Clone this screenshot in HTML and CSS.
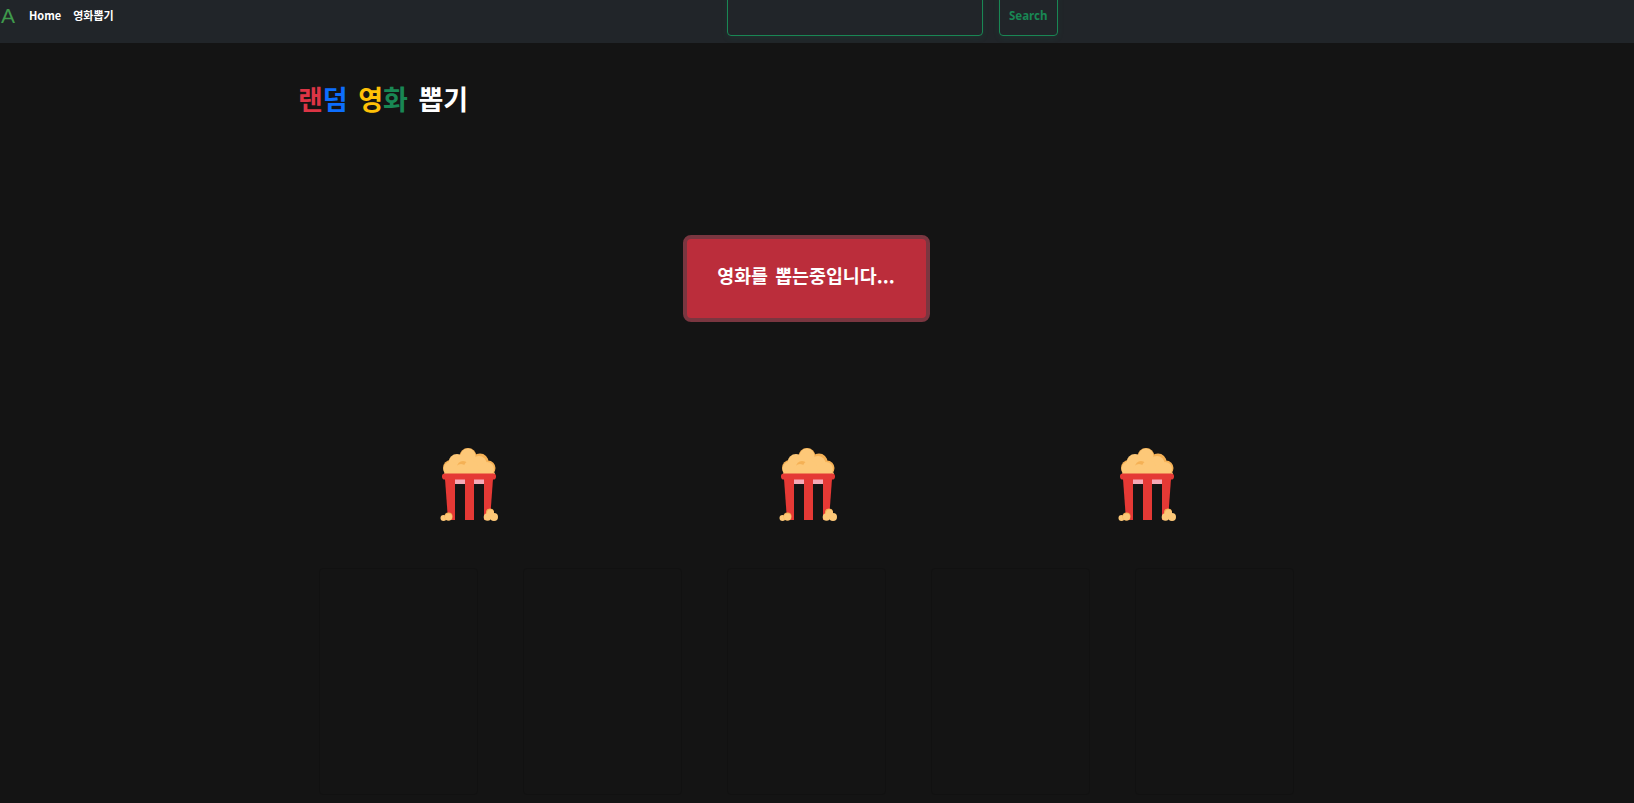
FILE: index.html
```html
<!DOCTYPE html>
<html lang="ko">
<head>
<meta charset="utf-8">
<title>랜덤 영화 뽑기</title>
<link rel="stylesheet" href="styles.css">
</head>
<body>
<svg class="defs" width="0" height="0" aria-hidden="true">
  <symbol id="popcorn" viewBox="0 0 60 76">
    <path d="M4 27 L8 20 L18 10 L40 10 L52 20 L55 27 Z" fill="#fdc878"/>
    <circle cx="11" cy="21" r="8" fill="#f5b155"/>
    <circle cx="48" cy="21" r="7.500" fill="#f5b155"/>
    <circle cx="40" cy="15" r="8.500" fill="#f5b155"/>
    <circle cx="28" cy="9.500" r="8.500" fill="#f5b155"/>
    <circle cx="28" cy="9" r="7.500" fill="#fdc878"/>
    <circle cx="39" cy="16.500" r="7.500" fill="#fdc878"/>
    <circle cx="47" cy="22" r="7" fill="#fdc878"/>
    <circle cx="17" cy="15.500" r="8.500" fill="#fdc878"/>
    <circle cx="11" cy="22" r="7.500" fill="#fdc878"/>
    <circle cx="23" cy="20" r="6" fill="#f5b155"/>
    <circle cx="31" cy="21" r="7.500" fill="#fdc878"/>
    <circle cx="21" cy="23" r="6" fill="#fdc878"/>
    <polygon points="5,32 15,32 15,73 8,73" fill="#e53935"/>
    <polygon points="25,32 34,32 34,73 25,73" fill="#e53935"/>
    <polygon points="44,32 53,32 50,73 44,73" fill="#e53935"/>
    <rect x="15" y="32" width="10" height="5" fill="#f6a9b6"/>
    <rect x="34" y="32" width="10" height="5" fill="#f6a9b6"/>
    <rect x="2" y="26.500" width="54" height="6" rx="2.800" fill="#e53935"/>
    <circle cx="3.500" cy="71" r="3" fill="#fdc878"/>
    <circle cx="8.500" cy="69.500" r="4" fill="#f5b155"/>
    <circle cx="8.500" cy="70" r="3.500" fill="#fdc878"/>
    <circle cx="50" cy="65.500" r="4" fill="#f5b155"/>
    <circle cx="47.500" cy="70" r="3.800" fill="#fdc878"/>
    <circle cx="54" cy="70" r="4" fill="#fdc878"/>
    <circle cx="50.500" cy="66" r="3.500" fill="#fdc878"/>
  </symbol>
</svg>

<nav class="navbar">
  <a class="brand">A</a>
  <a class="nav-link">Home</a>
  <a class="nav-link">영화뽑기</a>
  <form class="search">
    <input class="search-input" type="text" aria-label="Search">
    <button class="search-btn" type="button">Search</button>
  </form>
</nav>

<main class="main">
  <h1 class="title"><span class="c-red">랜</span><span class="c-blue">덤</span> <span class="c-yellow">영</span><span class="c-green">화</span> 뽑기</h1>
  <div class="action">
    <button class="draw-btn" type="button">영화를 뽑는중입니다...</button>
  </div>
  <div class="slots">
    <svg class="pop"><use href="#popcorn"/></svg>
    <svg class="pop"><use href="#popcorn"/></svg>
    <svg class="pop"><use href="#popcorn"/></svg>
  </div>
  <div class="cards">
    <div class="card"></div>
    <div class="card"></div>
    <div class="card"></div>
    <div class="card"></div>
    <div class="card"></div>
  </div>
</main>
</body>
</html>
```

FILE: styles.css
```css
* { box-sizing: border-box; }
html, body { height: 100%; }
body {
  margin: 0;
  background: #141414;
  color: #fff;
  font-family: "Noto Sans CJK KR", "Noto Sans", sans-serif;
  overflow: hidden;
}
.defs { position: absolute; }

.navbar {
  display: flex;
  align-items: flex-start;
  height: 43px;
  background: #212529;
  overflow: hidden;
}
.brand {
  width: 29px;
  padding: 4px 0 0 1px;
  font-family: "Liberation Sans", sans-serif;
  font-size: 21px;
  line-height: 24px;
  color: #3f9a4c;
}
.nav-link {
  margin: 6px 12px 0 0;
  font-size: 11px;
  font-weight: 700;
  line-height: 18px;
}
.search {
  display: flex;
  gap: 16px;
  margin: -10px 0 0 601px;
}
.search-input, .search-btn {
  height: 46px;
  border: 1px solid #198754;
  border-radius: 4px;
  background: transparent;
  box-shadow: 0 2px 6px rgba(25, 135, 84, 0.12);
}
.search-input { width: 256px; }
.search-btn {
  width: 59px;
  padding: 5px 0 0;
  color: #198754;
  font: 700 11.5px "Noto Sans", sans-serif;
}

.main {
  width: 1018px;
  margin-left: 298px;
}
.title {
  margin: 36px 0 0;
  font-size: 27px;
  font-weight: 700;
  line-height: 40px;
  word-spacing: 3px;
}
.c-red { color: #dc3545; }
.c-blue { color: #0d6efd; }
.c-yellow { color: #ffc107; }
.c-green { color: #198754; }

.action {
  display: flex;
  justify-content: center;
  margin-top: 116px;
  padding-right: 2px;
}
.draw-btn {
  width: 247px;
  height: 87px;
  padding: 0 0 8px;
  border: 4px solid #7a3640;
  border-radius: 8px;
  background: #bb2d3b;
  color: #fff;
  font: 700 18.4px "Noto Sans CJK KR", sans-serif;
  word-spacing: 2px;
}

.slots {
  display: grid;
  grid-template-columns: repeat(3, 339px);
  justify-items: center;
  margin: 125px 0 0 2px;
}
.pop { width: 60px; height: 76px; }

.cards {
  display: grid;
  grid-template-columns: repeat(5, 159px);
  gap: 45px;
  margin: 45px 0 0 21px;
}
.card {
  height: 227px;
  border: 1px solid #111;
  border-radius: 4px;
}
```
